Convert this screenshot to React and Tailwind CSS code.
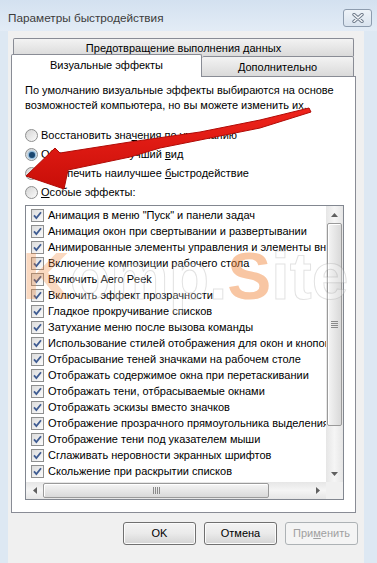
import React from "react";

const effects = [
  "Анимация в меню \"Пуск\" и панели задач",
  "Анимация окон при свертывании и развертывании",
  "Анимированные элементы управления и элементы внутри окна",
  "Включение композиции рабочего стола",
  "Включить Aero Peek",
  "Включить эффект прозрачности",
  "Гладкое прокручивание списков",
  "Затухание меню после вызова команды",
  "Использование стилей отображения для окон и кнопок",
  "Отбрасывание теней значками на рабочем столе",
  "Отображать содержимое окна при перетаскивании",
  "Отображать тени, отбрасываемые окнами",
  "Отображать эскизы вместо значков",
  "Отображение прозрачного прямоугольника выделения",
  "Отображение тени под указателем мыши",
  "Сглаживать неровности экранных шрифтов",
  "Скольжение при раскрытии списков",
];

function Radio({ checked, children }) {
  return (
    <div className="h-[19px] flex items-center">
      <span className="w-[13px] h-[13px] rounded-full border border-[#8e8f8f] bg-gradient-to-br from-[#d4d4d4] to-[#fbfbfb] flex items-center justify-center shrink-0">
        {checked && <span className="w-[6px] h-[6px] rounded-full bg-[#1b4770] shadow-[0_0_2px_1px_#6aa6d6]" />}
      </span>
      <span className="ml-[3px]">{children}</span>
    </div>
  );
}

function Check() {
  return (
    <span className="w-[13px] h-[13px] border border-[#8e8f8f] bg-gradient-to-br from-[#dcdcdc] to-[#fbfbfb] flex items-center justify-center shrink-0">
      <svg width="9" height="9" viewBox="0 0 9 9">
        <path d="M1 4.3 L3.4 7 L8 1.3" fill="none" stroke="#3f5c92" strokeWidth="1.8" />
      </svg>
    </span>
  );
}

function Arrow({ dir }) {
  const pts = {
    up: "0,4 3.5,0 7,4",
    down: "0,0 3.5,4 7,0",
    left: "4,0 0,3.5 4,7",
    right: "0,0 4,3.5 0,7",
  }[dir];
  const w = dir === "up" || dir === "down" ? 7 : 4;
  const h = dir === "up" || dir === "down" ? 4 : 7;
  return (
    <svg width={w} height={h} viewBox={`0 0 ${w} ${h}`}>
      <polygon points={pts} fill="#606060" />
    </svg>
  );
}

function Button({ children, disabled }) {
  return (
    <div
      className={
        disabled
          ? "w-[73px] h-[23px] rounded-[3px] border border-[#adb2b5] bg-[#f4f4f4] flex items-center justify-center text-[#a0a0a0]"
          : "w-[73px] h-[23px] rounded-[3px] border border-[#707070] bg-gradient-to-b from-[#f3f3f3] via-[#eaeaea] to-[#d4d4d4] shadow-[inset_0_0_0_1px_#fbfbfb] flex items-center justify-center"
      }
    >
      {children}
    </div>
  );
}

export default function App() {
  return (
    <div className="relative w-[377px] h-[563px] overflow-hidden bg-[#dde8f3] font-['Liberation_Sans',Arial,sans-serif] text-[11px] text-black">
      {/* title bar */}
      <div className="h-[31px] flex items-center justify-between pl-[8px] pr-[5px] bg-gradient-to-b from-[#d3e1f0] to-[#e3ecf6]">
        <span className="text-[11.75px] text-[#3c3c3c] pt-[4px]">Параметры быстродействия</span>
        <div className="w-[29px] h-[18px] mt-[5px] rounded-[3px] border border-[#8d9cae] bg-gradient-to-b from-[#eef3f8] to-[#d9e3ee] flex items-center justify-center">
          <svg width="12" height="10" viewBox="0 0 12 10">
            <path d="M2 1.5 L10 8.5 M10 1.5 L2 8.5" stroke="#6c7888" strokeWidth="3.4" strokeLinecap="round" />
            <path d="M2 1.5 L10 8.5 M10 1.5 L2 8.5" stroke="#f4f7fa" strokeWidth="1.6" strokeLinecap="round" />
          </svg>
        </div>
      </div>

      {/* client area */}
      <div className="ml-[8px] mr-[13px] h-[532px] bg-[#f0f0f0] pt-[7px] pl-[3px] pr-[8px]">
        {/* tabs */}
        <div className="mx-[2px] h-[18px] border border-b-0 border-[#898c95] rounded-t-[2px] bg-gradient-to-b from-[#f3f3f3] to-[#dadada] text-center leading-[18px]">
          Предотвращение выполнения данных
        </div>
        <div className="flex items-end h-[22px] mt-[-2px]">
          <div className="relative z-10 w-[191px] h-[23px] mb-[-1px] border border-b-0 border-[#898c95] rounded-t-[2px] bg-white text-center leading-[20px]">
            Визуальные эффекты
          </div>
          <div className="w-[152px] h-[20px] border border-b-0 border-l-0 border-[#898c95] rounded-t-[2px] bg-gradient-to-b from-[#f3f3f3] to-[#dadada] text-center leading-[20px]">
            Дополнительно
          </div>
        </div>

        {/* panel */}
        <div className="h-[437px] border border-[#898c95] bg-white pl-[13px] pt-[6px]">
          <p className="leading-[15px]">
            По умолчанию визуальные эффекты выбираются на основе
            <br />
            возможностей компьютера, но вы можете изменить их.
          </p>
          <div className="mt-[13px]">
            <Radio>
              Восстановить зна<span className="underline">ч</span>ения по умолчанию
            </Radio>
            <Radio checked>
              Обеспечить наилучший <span className="underline">в</span>ид
            </Radio>
            <Radio>
              Обеспечить наилучшее <span className="underline">б</span>ыстродействие
            </Radio>
            <Radio>
              <span className="underline">О</span>собые эффекты:
            </Radio>
          </div>

          {/* list box */}
          <div className="mt-[3px] w-[319px] h-[295px] border border-[#828790] flex flex-col">
            <div className="h-[276px] flex">
              <div className="flex-1 overflow-hidden pt-[1px] pl-[5px]">
                {effects.map((t) => (
                  <div key={t} className="h-[16px] flex items-center whitespace-nowrap">
                    <Check />
                    <span className="ml-[4px]">{t}</span>
                  </div>
                ))}
              </div>
              <div className="w-[17px] flex flex-col bg-gradient-to-r from-[#e6e6e6] via-[#f5f5f5] to-[#e6e6e6]">
                <div className="h-[17px] flex items-center justify-center">
                  <Arrow dir="up" />
                </div>
                <div className="mx-[1px] h-[203px] rounded-[2px] border border-[#9a9a9a] bg-gradient-to-r from-[#f5f5f5] to-[#d9d9d9] shadow-[inset_1px_1px_0_#ffffff] flex flex-col items-center justify-center gap-[1px]">
                  <span className="w-[7px] h-[1px] bg-[#8a8a8a]" />
                  <span className="w-[7px] h-[1px] bg-[#8a8a8a]" />
                  <span className="w-[7px] h-[1px] bg-[#8a8a8a]" />
                  <span className="w-[7px] h-[1px] bg-[#8a8a8a]" />
                </div>
                <div className="flex-1" />
                <div className="h-[17px] flex items-center justify-center">
                  <Arrow dir="down" />
                </div>
              </div>
            </div>
            <div className="h-[17px] flex bg-gradient-to-b from-[#e6e6e6] via-[#f5f5f5] to-[#e6e6e6]">
              <div className="w-[17px] flex items-center justify-center">
                <Arrow dir="left" />
              </div>
              <div className="flex-1 flex items-stretch py-[1px]">
                <div className="w-[226px] rounded-[2px] border border-[#9a9a9a] bg-gradient-to-b from-[#f5f5f5] to-[#d9d9d9] shadow-[inset_1px_1px_0_#ffffff] flex items-center justify-center gap-[1px]">
                  <span className="w-[1px] h-[7px] bg-[#8a8a8a]" />
                  <span className="w-[1px] h-[7px] bg-[#8a8a8a]" />
                  <span className="w-[1px] h-[7px] bg-[#8a8a8a]" />
                  <span className="w-[1px] h-[7px] bg-[#8a8a8a]" />
                </div>
              </div>
              <div className="w-[17px] flex items-center justify-center">
                <Arrow dir="right" />
              </div>
              <div className="w-[17px] bg-[#f0f0f0]" />
            </div>
          </div>
        </div>

        {/* buttons */}
        <div className="mt-[9px] mr-[-2px] flex justify-end gap-[8px]">
          <Button>OK</Button>
          <Button>Отмена</Button>
          <Button disabled>
            При<span className="underline">м</span>енить
          </Button>
        </div>
      </div>

      {/* watermark */}
      <div className="pointer-events-none absolute left-[22px] top-[243px] text-[66px] font-bold leading-none whitespace-nowrap">
        <span className="text-[rgba(240,128,50,0.3)]">K</span>
        <span className="text-[rgba(255,255,255,0.25)] [-webkit-text-stroke:1px_rgba(140,140,140,0.25)]">omp.</span>
        <span className="text-[rgba(240,128,50,0.45)]">S</span>
        <span className="text-[rgba(255,255,255,0.25)] [-webkit-text-stroke:1px_rgba(140,140,140,0.25)]">ite</span>
      </div>

      {/* red arrow */}
      <svg className="pointer-events-none absolute left-0 top-0" width="377" height="563" viewBox="0 0 377 563">
        <defs>
          <linearGradient id="ar" x1="0" y1="0" x2="0" y2="1">
            <stop offset="0" stopColor="#f0241c" />
            <stop offset="1" stopColor="#c80e08" />
          </linearGradient>
        </defs>
        <polygon
          points="26,176 55,148 60,153 130,142 200,132 260,120 309,108 311,112 260,128 200,140 160,148 130,157 68,170 64,189"
          fill="url(#ar)"
          stroke="#b00c07"
          strokeWidth="1"
          strokeLinejoin="round"
        />
      </svg>
    </div>
  );
}
